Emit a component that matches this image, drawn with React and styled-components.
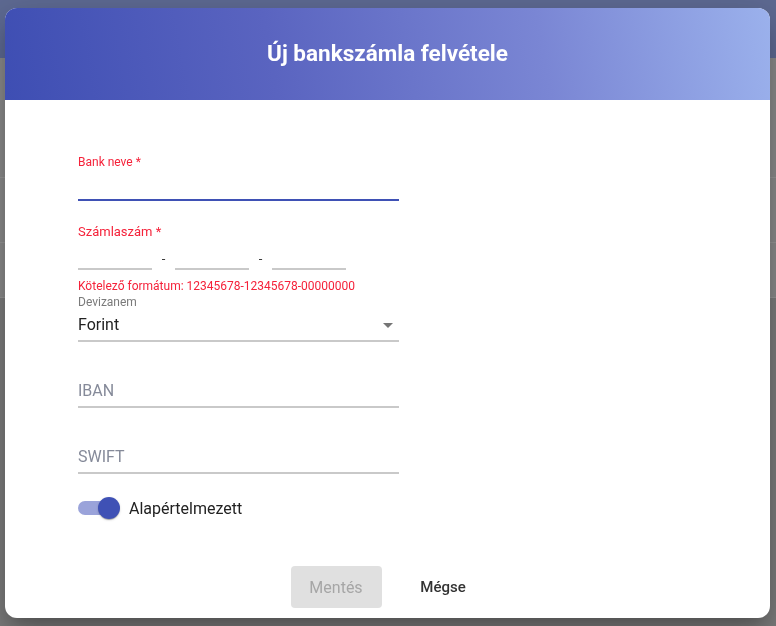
import React from "react";
import styled, { createGlobalStyle } from "styled-components";

const GlobalStyle = createGlobalStyle`
  html, body { margin: 0; padding: 0; }
  body {
    font-family: Roboto, "Noto Sans", Arial, sans-serif;
    background: #8a8a8a;
    overflow: hidden;
  }
  * { box-sizing: border-box; }
`;

const Backdrop = styled.div`
  width: 776px;
  height: 626px;
  display: flex;
  flex-direction: column;
  background: #8a8a8a;
`;

const FakeBar = styled.div`
  height: 58px;
  background: #5e6a93;
  flex: none;
`;

const FakeRow = styled.div`
  height: ${(p) => p.$h}px;
  border-bottom: 1px solid #979797;
  background: #8b8b8b;
  flex: none;
`;

const FakeRest = styled.div`
  flex: 1;
  background: #7d7d7d;
`;

const Overlay = styled.div`
  position: fixed;
  inset: 0;
  display: flex;
  align-items: flex-start;
  padding: 8px 0 0 5px;
`;

const Dialog = styled.div`
  width: 765px;
  height: 610px;
  background: #fff;
  border-radius: 12px;
  overflow: hidden;
  display: flex;
  flex-direction: column;
  box-shadow: 0 11px 15px -7px rgba(0, 0, 0, 0.2),
    0 24px 38px 3px rgba(0, 0, 0, 0.14), 0 9px 46px 8px rgba(0, 0, 0, 0.12);
`;

const Header = styled.div`
  height: 92px;
  flex: none;
  display: flex;
  align-items: center;
  justify-content: center;
  background: linear-gradient(80deg, #3e4eb3 0%, #5a64c0 35%, #7a86d4 70%, #9bb1ec 100%);
`;

const Title = styled.h2`
  margin: 0;
  color: #fff;
  font-size: 22.5px;
  font-weight: 700;
  letter-spacing: 0;
  padding-bottom: 2px;
`;

const Body = styled.div`
  flex: 1;
  padding: 55px 0 0 73px;
  display: flex;
  flex-direction: column;
`;

const Field = styled.div`
  width: ${(p) => p.$w || 321}px;
  display: flex;
  flex-direction: column;
  margin-top: ${(p) => p.$mt || 0}px;
`;

const SmallLabel = styled.div`
  font-size: ${(p) => p.$size || 12}px;
  line-height: ${(p) => p.$lh || 14}px;
  color: ${(p) => (p.$error ? "#f5223a" : "#7a7a7a")};
  margin-top: ${(p) => p.$mt || 0}px;
`;

const InputArea = styled.div`
  height: ${(p) => p.$h}px;
  display: flex;
  align-items: center;
  font-size: 16px;
  color: ${(p) => (p.$placeholder ? "#858a99" : "#222")};
  position: relative;
`;

const Underline = styled.div`
  height: 2px;
  background: ${(p) => (p.$focused ? "#3f51b5" : "#c9c9c9")};
`;

const SplitRow = styled.div`
  display: flex;
`;

const SplitPart = styled.div`
  width: 74px;
  display: flex;
  flex-direction: column;
`;

const Dash = styled.div`
  width: 23px;
  height: 28px;
  padding-top: 12px;
  text-align: center;
  font-size: 13px;
  line-height: 13px;
  color: #333;
`;

const SelectText = styled.span`
  flex: 1;
`;

const ArrowIcon = styled.svg`
  width: 24px;
  height: 24px;
  fill: #757575;
  flex: none;
  margin-right: -1px;
`;

const SwitchRow = styled.div`
  display: flex;
  align-items: center;
  height: 24px;
  margin-top: 22px;
  gap: 9px;
`;

const Track = styled.div`
  position: relative;
  width: 34px;
  height: 14px;
  border-radius: 7px;
  background: #9aa3da;
  margin-right: 8px;
`;

const Thumb = styled.div`
  position: absolute;
  top: -4px;
  left: 20px;
  width: 22px;
  height: 22px;
  border-radius: 50%;
  background: #3f51b5;
  box-shadow: 0 2px 1px -1px rgba(0, 0, 0, 0.2), 0 1px 1px 0 rgba(0, 0, 0, 0.14),
    0 1px 3px 0 rgba(0, 0, 0, 0.12);
`;

const SwitchLabel = styled.span`
  font-size: 16px;
  color: #222;
`;

const Footer = styled.div`
  flex: none;
  display: flex;
  justify-content: center;
  gap: 16px;
  padding: 0 0 10px 4px;
`;

const Button = styled.button`
  width: 91px;
  height: 42px;
  border: none;
  border-radius: 4px;
  font-family: Roboto, "Noto Sans", Arial, sans-serif;
  font-size: ${(p) => (p.$disabled ? 16 : 15)}px;
  font-weight: ${(p) => (p.$disabled ? 400 : 500)};
  background: ${(p) => (p.$disabled ? "#e0e0e0" : "transparent")};
  color: ${(p) => (p.$disabled ? "#a6a6a6" : "#333")};
  padding: 0;
  cursor: pointer;
`;

export default function App() {
  return (
    <>
      <GlobalStyle />
      <Backdrop>
        <FakeBar />
        <FakeRow $h={120} />
        <FakeRow $h={65} />
        <FakeRow $h={55} />
        <FakeRest />
      </Backdrop>
      <Overlay>
        <Dialog>
          <Header>
            <Title>Új bankszámla felvétele</Title>
          </Header>
          <Body>
            <Field>
              <SmallLabel $error>Bank neve *</SmallLabel>
              <InputArea $h={30} />
              <Underline $focused />
            </Field>

            <Field $mt={23}>
              <SmallLabel $error $size={13} $lh={16}>
                Számlaszám *
              </SmallLabel>
              <SplitRow>
                <SplitPart>
                  <InputArea $h={28} />
                  <Underline />
                </SplitPart>
                <Dash>-</Dash>
                <SplitPart>
                  <InputArea $h={28} />
                  <Underline />
                </SplitPart>
                <Dash>-</Dash>
                <SplitPart>
                  <InputArea $h={28} />
                  <Underline />
                </SplitPart>
              </SplitRow>
              <SmallLabel $error $mt={9}>
                Kötelező formátum: 12345678-12345678-00000000
              </SmallLabel>
            </Field>

            <Field $mt={2}>
              <SmallLabel>Devizanem</SmallLabel>
              <InputArea $h={31}>
                <SelectText>Forint</SelectText>
                <ArrowIcon viewBox="0 0 24 24">
                  <path d="M7 10l5 5 5-5z" />
                </ArrowIcon>
              </InputArea>
              <Underline />
            </Field>

            <Field $mt={32}>
              <InputArea $h={32} $placeholder>
                IBAN
              </InputArea>
              <Underline />
            </Field>

            <Field $mt={32}>
              <InputArea $h={32} $placeholder>
                SWIFT
              </InputArea>
              <Underline />
            </Field>

            <SwitchRow>
              <Track>
                <Thumb />
              </Track>
              <SwitchLabel>Alapértelmezett</SwitchLabel>
            </SwitchRow>
          </Body>
          <Footer>
            <Button $disabled disabled>
              Mentés
            </Button>
            <Button>Mégse</Button>
          </Footer>
        </Dialog>
      </Overlay>
    </>
  );
}
